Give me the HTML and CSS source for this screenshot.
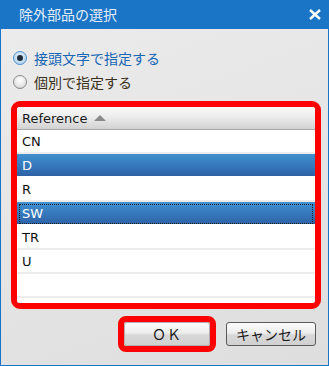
FILE: index.html
```html
<!DOCTYPE html>
<html lang="ja">
<head>
<meta charset="utf-8">
<link rel="stylesheet" href="styles.css">
</head>
<body>
<div class="window">
  <div class="titlebar">
    <span class="title">除外部品の選択</span>
    <svg class="close" width="12" height="11" viewBox="0 0 12 11"><path d="M1 1 L11 10 M11 1 L1 10" stroke="#fff" stroke-width="2.4" fill="none"/></svg>
  </div>
  <div class="content">
    <div class="radios">
      <label class="radio-row active"><span class="radio checked"></span><span class="rtext">接頭文字で指定する</span></label>
      <label class="radio-row"><span class="radio"></span><span class="rtext">個別で指定する</span></label>
    </div>
    <div class="highlight list-box">
      <div class="list">
        <div class="header"><span>Reference</span><span class="sort"></span></div>
        <div class="row">CN</div>
        <div class="row sel">D</div>
        <div class="row">R</div>
        <div class="row sel focus">SW</div>
        <div class="row">TR</div>
        <div class="row">U</div>
        <div class="row"></div>
        <div class="row"></div>
      </div>
    </div>
    <div class="buttons">
      <div class="highlight ok-wrap"><button class="btn ok">ＯＫ</button></div>
      <button class="btn cancel">キャンセル</button>
    </div>
  </div>
</div>
</body>
</html>
```
FILE: styles.css
```css
* { box-sizing: border-box; }
html, body { margin: 0; padding: 0; }
body {
  width: 329px;
  height: 366px;
  overflow: hidden;
  font-family: "DejaVu Sans", "Noto Sans CJK JP", sans-serif;
}
.window {
  width: 329px;
  height: 366px;
  border: 1px solid #1a74c6;
  border-top: none;
  display: flex;
  flex-direction: column;
  background: linear-gradient(160deg, #ececec 0%, #dedede 100%);
}
.titlebar {
  height: 29px;
  flex: none;
  margin: 0 -1px;
  background: #1a75c7;
  display: flex;
  align-items: center;
  justify-content: space-between;
  padding: 0 8px 1px 19px;
}
.title {
  font-family: "Noto Sans CJK JP", sans-serif;
  font-size: 14px;
  color: #e4edf7;
  line-height: 1;
  margin-top: -1px;
}
.close { display: block; margin-top: 0px; }
.content {
  flex: 1;
  display: flex;
  flex-direction: column;
  padding: 17px 0 0 10px;
}
.radios { display: flex; flex-direction: column; }
.radio-row {
  height: 24px;
  display: flex;
  align-items: center;
  padding-left: 2px;
}
.radio {
  width: 14px;
  height: 14px;
  border-radius: 50%;
  border: 1px solid #8a8a8a;
  background: radial-gradient(circle at 50% 35%, #ffffff 0%, #e8e8e8 55%, #c4c4c4 100%);
  display: flex;
  align-items: center;
  justify-content: center;
}
.radio.checked {
  border-color: #4e8fd0;
  background: radial-gradient(circle at 50% 40%, #e9f3fc 0%, #b8d6f2 70%, #8fbbe6 100%);
}
.radio.checked::after {
  content: "";
  width: 6px;
  height: 6px;
  border-radius: 50%;
  background: #1e2a36;
}
.rtext {
  font-family: "Noto Sans CJK JP", sans-serif;
  font-size: 14px;
  margin-left: 7px;
  color: #3a3020;
  line-height: 1;
}
.active .rtext { color: #1766b4; }
.highlight {
  border: 6px solid #ff0000;
  border-radius: 9px;
}
.list-box {
  margin-top: 7px;
  width: 310px;
  height: 208px;
  overflow: hidden;
}
.list {
  background: #ffffff;
  height: 100%;
  overflow: hidden;
}
.header {
  height: 23px;
  background: linear-gradient(#fafafa 0%, #ececec 45%, #d2d2d2 100%);
  border-bottom: 1px solid #a8a8a8;
  display: flex;
  align-items: center;
  padding-left: 5px;
  font-size: 13px;
  color: #1a1a1a;
}
.sort {
  width: 0;
  height: 0;
  border-left: 6px solid transparent;
  border-right: 6px solid transparent;
  border-bottom: 6px solid #8a8a8a;
  margin-left: 7px;
  margin-bottom: 1px;
}
.row {
  height: 24px;
  border-bottom: 2px solid #ececec;
  padding-left: 5px;
  display: flex;
  align-items: center;
  font-size: 13px;
  color: #111;
}
.row.sel {
  background: linear-gradient(#4190d0 0%, #3577ba 55%, #2e62a6 100%);
  background-clip: padding-box;
  border-bottom-color: #ffffff;
  color: #ffffff;
}
.row.focus { outline: 1px dotted #222; outline-offset: -3px; }
.buttons {
  display: flex;
  justify-content: flex-end;
  align-items: center;
  gap: 10px;
  padding-right: 12px;
  margin-top: 7px;
}
.ok-wrap {
  width: 98px;
  height: 36px;
  border-radius: 8px;
}
.btn {
  font-family: "Noto Sans CJK JP", sans-serif;
  font-size: 14px;
  color: #1a1a1a;
  height: 24px;
  border-radius: 3px;
  background: linear-gradient(#fbfbfb 0%, #eeeeee 45%, #d8d8d8 55%, #d0d0d0 100%);
  padding: 0;
  line-height: 1;
}
.ok {
  width: 86px;
  border: 1px solid #b0b0b0;
  letter-spacing: 1px;
}
.cancel {
  width: 90px;
  border: 1px solid #5a5a5a;
}
```
